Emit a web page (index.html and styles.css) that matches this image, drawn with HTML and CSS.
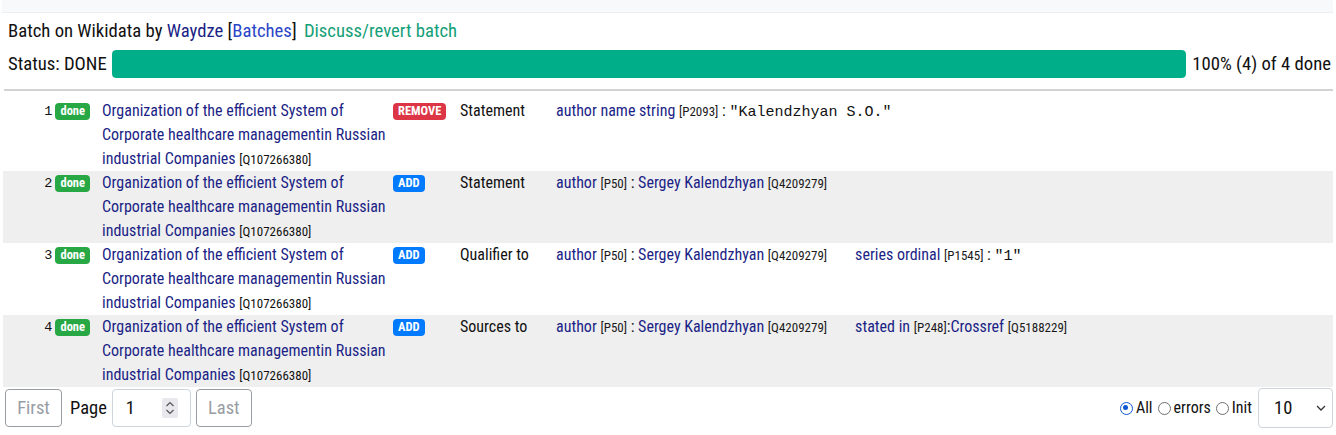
FILE: index.html
```html
<!DOCTYPE html>
<html>
<head>
<meta charset="utf-8">
<title>Batch</title>
<link rel="stylesheet" href="styles.css">
</head>
<body>
<div class="topstrip"></div>
<div class="page">
  <div class="headline">Batch on Wikidata by <a class="visited" href="#">Waydze</a> [<a class="link" href="#">Batches</a>] <a class="green" href="#">Discuss/revert batch</a></div>
  <div class="status">
    <span class="status-label">Status: DONE</span>
    <div class="bar"><div class="bar-fill" style="width:100%"></div></div>
    <span class="status-count">100% (4) of 4 done</span>
  </div>
  <hr class="rule">
  <table class="cmds">
    <colgroup><col class="c1"><col class="c2"><col class="c3"><col class="c4"><col class="c5"></colgroup>
    <tr>
      <td class="num"><span class="n">1</span><span class="badge ok">done</span></td>
      <td class="title"><a href="#">Organization of the efficient System of Corporate healthcare managementin Russian industrial Companies</a> <span class="id">[Q107266380]</span></td>
      <td><span class="badge rm">REMOVE</span></td>
      <td>Statement</td>
      <td><a href="#">author name string</a> <span class="id">[P2093]</span> : <span class="mono">"Kalendzhyan S.O."</span></td>
    </tr>
    <tr class="alt">
      <td class="num"><span class="n">2</span><span class="badge ok">done</span></td>
      <td class="title"><a href="#">Organization of the efficient System of Corporate healthcare managementin Russian industrial Companies</a> <span class="id">[Q107266380]</span></td>
      <td><span class="badge add">ADD</span></td>
      <td>Statement</td>
      <td><a href="#">author</a> <span class="id">[P50]</span> : <a href="#">Sergey Kalendzhyan</a> <span class="id">[Q4209279]</span></td>
    </tr>
    <tr>
      <td class="num"><span class="n">3</span><span class="badge ok">done</span></td>
      <td class="title"><a href="#">Organization of the efficient System of Corporate healthcare managementin Russian industrial Companies</a> <span class="id">[Q107266380]</span></td>
      <td><span class="badge add">ADD</span></td>
      <td>Qualifier to</td>
      <td><a href="#">author</a> <span class="id">[P50]</span> : <a href="#">Sergey Kalendzhyan</a> <span class="id">[Q4209279]</span><span class="qual"><a href="#">series ordinal</a> <span class="id">[P1545]</span> : <span class="mono">"1"</span></span></td>
    </tr>
    <tr class="alt">
      <td class="num"><span class="n">4</span><span class="badge ok">done</span></td>
      <td class="title"><a href="#">Organization of the efficient System of Corporate healthcare managementin Russian industrial Companies</a> <span class="id">[Q107266380]</span></td>
      <td><span class="badge add">ADD</span></td>
      <td>Sources to</td>
      <td><a href="#">author</a> <span class="id">[P50]</span> : <a href="#">Sergey Kalendzhyan</a> <span class="id">[Q4209279]</span><span class="qual"><a href="#">stated in</a> <span class="id">[P248]</span>:<a href="#">Crossref</a> <span class="id">[Q5188229]</span></span></td>
    </tr>
  </table>
  <div class="footer">
    <div class="pager">
      <button class="btn" disabled>First</button>
      <span class="page-label">Page</span>
      <div class="numinput"><span>1</span>
        <svg class="spin" width="16" height="20" viewBox="0 0 16 20"><rect x="0" y="0" width="16" height="20" rx="2" fill="#e9e9ed"/><path d="M4.5 8 L8 4.5 L11.5 8" fill="none" stroke="#555" stroke-width="1.2"/><path d="M4.5 12 L8 15.5 L11.5 12" fill="none" stroke="#555" stroke-width="1.2"/></svg>
      </div>
      <button class="btn last">Last</button>
    </div>
    <div class="filters">
      <label class="radio"><span class="dot on"></span>All</label>
      <label class="radio"><span class="dot"></span>errors</label>
      <label class="radio"><span class="dot"></span>Init</label>
      <div class="select"><span>10</span>
        <svg width="10" height="6" viewBox="0 0 10 6"><path d="M1 1 L5 5 L9 1" fill="none" stroke="#333" stroke-width="1.3"/></svg>
      </div>
    </div>
  </div>
</div>
</body>
</html>
```
FILE: styles.css
```css
html, body {
  margin: 0;
  padding: 0;
  background: #fff;
}
body {
  font-family: Roboto, "Liberation Sans", sans-serif;
  font-stretch: 80%;
  font-size: 16px;
  line-height: 24px;
  color: #111;
}
a { text-decoration: none; color: #1b1f86; }
.topstrip {
  height: 12px;
  margin: 0 3px 0 2px;
  background: #f8f9fa;
  border-bottom: 1px solid #eceef0;
}
.page {
  padding: 0 3px 0 3px;
}
.headline {
  margin-top: 5px;
  padding-left: 5px;
  height: 27px;
  line-height: 27px;
  font-size: 18.7px;
}
.headline .visited { color: #1b1f86; }
.headline .link { color: #2a45c8; }
.headline .green { color: #14a078; margin-left: 3px; }
.status {
  display: flex;
  align-items: center;
  gap: 5px;
  margin-top: 5px;
  padding-left: 5px;
  height: 28px;
  font-size: 18.7px;
}
.status-label { white-space: nowrap; }
.bar {
  flex: 1;
  height: 28px;
  background: #e9ecef;
  border-radius: 4px;
  overflow: hidden;
}
.bar-fill { height: 100%; background: #00af89; border-radius: 4px; }
.status-count { white-space: nowrap; margin-left: 1px; margin-right: 2px; }
.rule {
  margin: 11px 0 8px 1px;
  border: 0;
  border-top: 2px solid #d3d3d3;
  height: 0;
}
.cmds {
  width: 100%;
  border-collapse: collapse;
  table-layout: fixed;
}
.c1 { width: 94px; }
.c2 { width: 291px; }
.c3 { width: 67px; }
.c4 { width: 96px; }
.cmds td {
  vertical-align: top;
  padding: 0 5px;
  height: 72px;
  box-sizing: border-box;
}
.cmds td.title { padding-right: 1px; }
.cmds tr.alt td { background: #efefef; }
.cmds td.num { text-align: right; padding-right: 7px; padding-left: 0; }
.n {
  font-family: "Liberation Mono", monospace;
  font-size: 13.5px;
  line-height: 1;
  position: relative;
  top: -1px;
}
.badge {
  display: inline-block;
  font-size: 12.5px;
  font-weight: 700;
  line-height: 1;
  padding: 2px 5px 2px;
  border-radius: 4px;
  color: #fff;
  vertical-align: 1px;
}
.num .badge { margin-left: 3px; }
.badge.ok { background: #28a745; }
.badge.rm { background: #dc3545; }
.badge.add { background: #007bff; }
.id { font-size: 13px; line-height: 1; color: #1a1a1a; }
.title .id { color: #111; }
.mono { font-family: "Liberation Mono", monospace; font-size: 15px; line-height: 1; font-stretch: 100%; }
.qual { margin-left: 28px; }
.footer {
  display: flex;
  justify-content: space-between;
  align-items: center;
  padding-top: 1px;
  font-size: 18.5px;
}
.pager { display: flex; align-items: center; margin-left: 2px; }
.btn {
  font-family: inherit;
  font-stretch: 80%;
  font-size: 18.5px;
  height: 38px;
  width: 57px;
  padding: 0;
  background: #fff;
  border: 1px solid #6c757d;
  border-radius: 4px;
  color: #6c757d;
  opacity: 0.7;
}
.btn.last { margin-left: 5px; width: 56px; }
.page-label { margin: 0 5px 0 8px; color: #111; }
.numinput {
  width: 79px;
  height: 38px;
  box-sizing: border-box;
  border: 1px solid #ced4da;
  border-radius: 4px;
  display: flex;
  align-items: center;
  justify-content: space-between;
  padding: 0 12px 0 13px;
}
.filters { display: flex; align-items: center; }
.radio { display: flex; align-items: center; margin-left: 5px; font-size: 16px; }
.dot {
  width: 13px;
  height: 13px;
  box-sizing: border-box;
  border: 1.5px solid #6f6f6f;
  border-radius: 50%;
  margin-right: 3px;
  position: relative;
}
.dot.on { border-color: #0b57d0; }
.dot.on::after {
  content: "";
  position: absolute;
  left: 2.5px; top: 2.5px;
  width: 5px; height: 5px;
  border-radius: 50%;
  background: #0b57d0;
}
.select {
  margin-left: 6px;
  width: 75px;
  height: 40px;
  box-sizing: border-box;
  border: 1px solid #ced4da;
  border-radius: 4px;
  display: flex;
  align-items: center;
  justify-content: space-between;
  padding: 0 6px 0 15px;
}
```
